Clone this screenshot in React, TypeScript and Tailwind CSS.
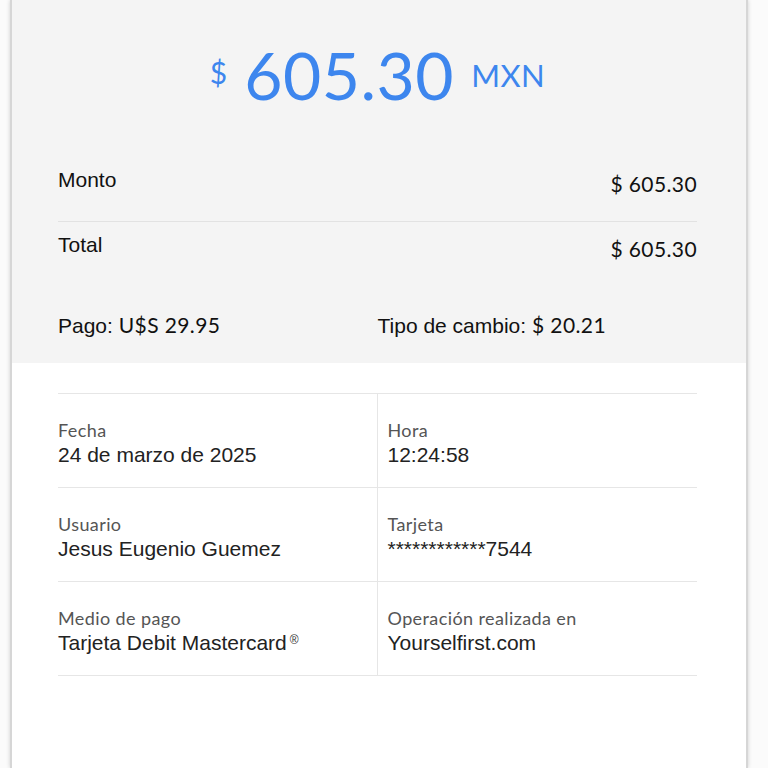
const details = [
  [
    { label: 'Fecha', value: '24 de marzo de 2025' },
    { label: 'Hora', value: '12:24:58' },
  ],
  [
    { label: 'Usuario', value: 'Jesus Eugenio Guemez' },
    { label: 'Tarjeta', value: '************7544' },
  ],
  [
    { label: 'Medio de pago', value: 'Tarjeta Debit Mastercard', reg: true },
    { label: 'Operación realizada en', value: 'Yourselfirst.com' },
  ],
];

const sans = "font-['Liberation_Sans',Arial,sans-serif]";
const soft = "font-['Lato','Open_Sans',sans-serif]";

export default function App() {
  return (
    <div className="min-h-screen bg-[#fbfbfb] pl-[10px] pr-[20px]">
      <div className="min-h-screen bg-white border-x-2 border-[#d6d6d6] shadow-[0_0_4px_rgba(0,0,0,0.18)]">
        {/* resumen */}
        <div className="bg-[#f4f4f4] pl-[46px] pr-[49px]">
          <div className={`h-[150px] flex items-center justify-center text-[#3d86ee] ${soft}`}>
            <span className="text-[30px] mr-[17px] mt-[-6px]">$</span>
            <span className="text-[66px] leading-none tracking-[0.5px]">605.30</span>
            <span className="text-[31px] ml-[17px] tracking-[0.5px]">MXN</span>
          </div>

          <div className="h-[72px] flex justify-between border-b border-[#e2e2e2] pt-[19px]">
            <span className={`text-[21px] leading-[22px] text-[#111] ${sans}`}>Monto</span>
            <span className={`text-[21px] leading-[22px] mt-[4px] tracking-[0.4px] text-[#111] ${soft}`}>$ 605.30</span>
          </div>

          <div className="h-[68px] flex justify-between pt-[12px]">
            <span className={`text-[21px] leading-[22px] text-[#111] ${sans}`}>Total</span>
            <span className={`text-[21px] leading-[22px] mt-[4px] tracking-[0.4px] text-[#111] ${soft}`}>$ 605.30</span>
          </div>

          <div className="grid grid-cols-2 pt-[24px] pb-[26px] text-[21px] leading-[22px] text-[#111]">
            <div>
              <span className={sans}>Pago: </span>
              <span className={`tracking-[0.4px] ${soft}`}>U$S 29.95</span>
            </div>
            <div>
              <span className={sans}>Tipo de cambio: </span>
              <span className={`tracking-[0.4px] ${soft}`}>$ 20.21</span>
            </div>
          </div>
        </div>

        {/* detalle */}
        <div className="pl-[46px] pr-[49px] pt-[30px]">
          <div className="border-t border-[#e6e6e6]">
            {details.map((row, i) => (
              <div key={i} className="grid grid-cols-2 h-[94px] border-b border-[#e6e6e6]">
                {row.map((cell, j) => (
                  <div
                    key={j}
                    className={j === 0 ? 'pt-[26px] border-r border-[#e6e6e6]' : 'pt-[26px] pl-[10px]'}
                  >
                    <div className={`text-[18px] leading-[20px] tracking-[0.4px] text-[#555] ${soft}`}>{cell.label}</div>
                    <div className={`mt-[3px] text-[21px] leading-[24px] text-[#222] ${sans}`}>
                      {cell.value}
                      {'reg' in cell && cell.reg && (
                        <sup className="ml-[3px] text-[12px] text-[#333]">®</sup>
                      )}
                    </div>
                  </div>
                ))}
              </div>
            ))}
          </div>
        </div>
      </div>
    </div>
  );
}
